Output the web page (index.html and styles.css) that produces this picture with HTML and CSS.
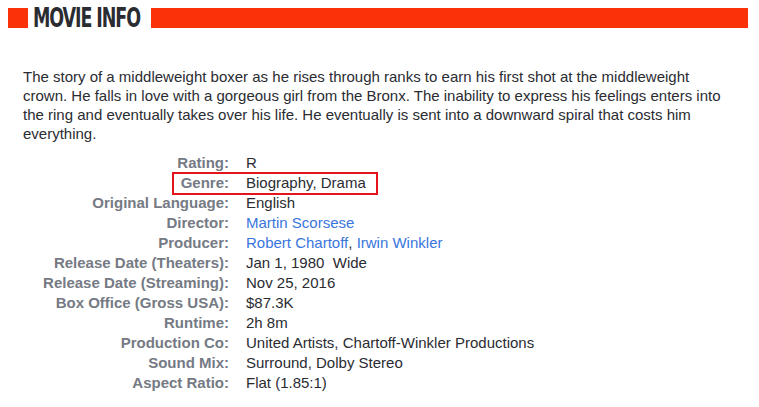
FILE: index.html
```html
<!DOCTYPE html>
<html>
<head>
<meta charset="utf-8">
<link rel="stylesheet" href="styles.css">
</head>
<body>
<section class="movie-info">
  <header class="section-header">
    <span class="square"></span>
    <h2 class="title"><span class="title-text">MOVIE INFO</span></h2>
    <span class="bar"></span>
  </header>
  <p class="synopsis">The story of a middleweight boxer as he rises through ranks to earn his first shot at the middleweight crown. He falls in love with a gorgeous girl from the Bronx. The inability to express his feelings enters into the ring and eventually takes over his life. He eventually is sent into a downward spiral that costs him everything.</p>
  <div class="details">
    <div class="label">Rating:</div><div class="value">R</div>
    <div class="label">Genre:</div><div class="value">Biography, Drama</div>
    <div class="label">Original Language:</div><div class="value">English</div>
    <div class="label">Director:</div><div class="value"><a href="#">Martin Scorsese</a></div>
    <div class="label">Producer:</div><div class="value"><a href="#">Robert Chartoff</a>, <a href="#">Irwin Winkler</a></div>
    <div class="label">Release Date (Theaters):</div><div class="value">Jan 1, 1980&nbsp; Wide</div>
    <div class="label">Release Date (Streaming):</div><div class="value">Nov 25, 2016</div>
    <div class="label">Box Office (Gross USA):</div><div class="value">$87.3K</div>
    <div class="label">Runtime:</div><div class="value">2h 8m</div>
    <div class="label">Production Co:</div><div class="value">United Artists, Chartoff-Winkler Productions</div>
    <div class="label">Sound Mix:</div><div class="value">Surround, Dolby Stereo</div>
    <div class="label">Aspect Ratio:</div><div class="value">Flat (1.85:1)</div>
    <span class="highlight"></span>
  </div>
</section>
</body>
</html>
```
FILE: styles.css
```css
html, body {
  margin: 0;
  padding: 0;
  background: #fff;
}
body {
  font-family: "Liberation Sans", Arial, sans-serif;
  color: #2a2c32;
}
.movie-info {
  padding: 8px 11px 0 8px;
}
.section-header {
  display: flex;
  align-items: center;
  height: 20px;
}
.square {
  width: 20px;
  height: 20px;
  background: #fa320a;
  flex: none;
}
.title {
  margin: 0 12px 0 5px;
  width: 106px;
  flex: none;
  height: 20px;
  overflow: visible;
  font-family: "DejaVu Sans Condensed", "DejaVu Sans", sans-serif;
  font-weight: bold;
  font-size: 27px;
  line-height: 20px;
  color: #2a2c32;
  white-space: nowrap;
}
.title-text {
  display: inline-block;
  letter-spacing: -1.5px;
  transform: scaleX(0.72);
  transform-origin: left center;
}
.bar {
  flex: 1;
  height: 20px;
  background: #fa320a;
}
.synopsis {
  margin: 39px 0 0 15px;
  font-size: 15px;
  line-height: 19px;
  width: 705px;
}
.details {
  position: relative;
  margin-top: 10px;
  display: grid;
  grid-template-columns: 221px auto;
  column-gap: 17px;
  font-size: 15px;
  line-height: 20px;
}
.label {
  text-align: right;
  font-weight: bold;
  color: #757a84;
}
.value {
  color: #2a2c32;
}
.value a {
  color: #3976dc;
  text-decoration: none;
}
.highlight {
  position: absolute;
  left: 164px;
  top: 19px;
  width: 202px;
  height: 19px;
  border: 2px solid #e5141b;
  pointer-events: none;
}
```
